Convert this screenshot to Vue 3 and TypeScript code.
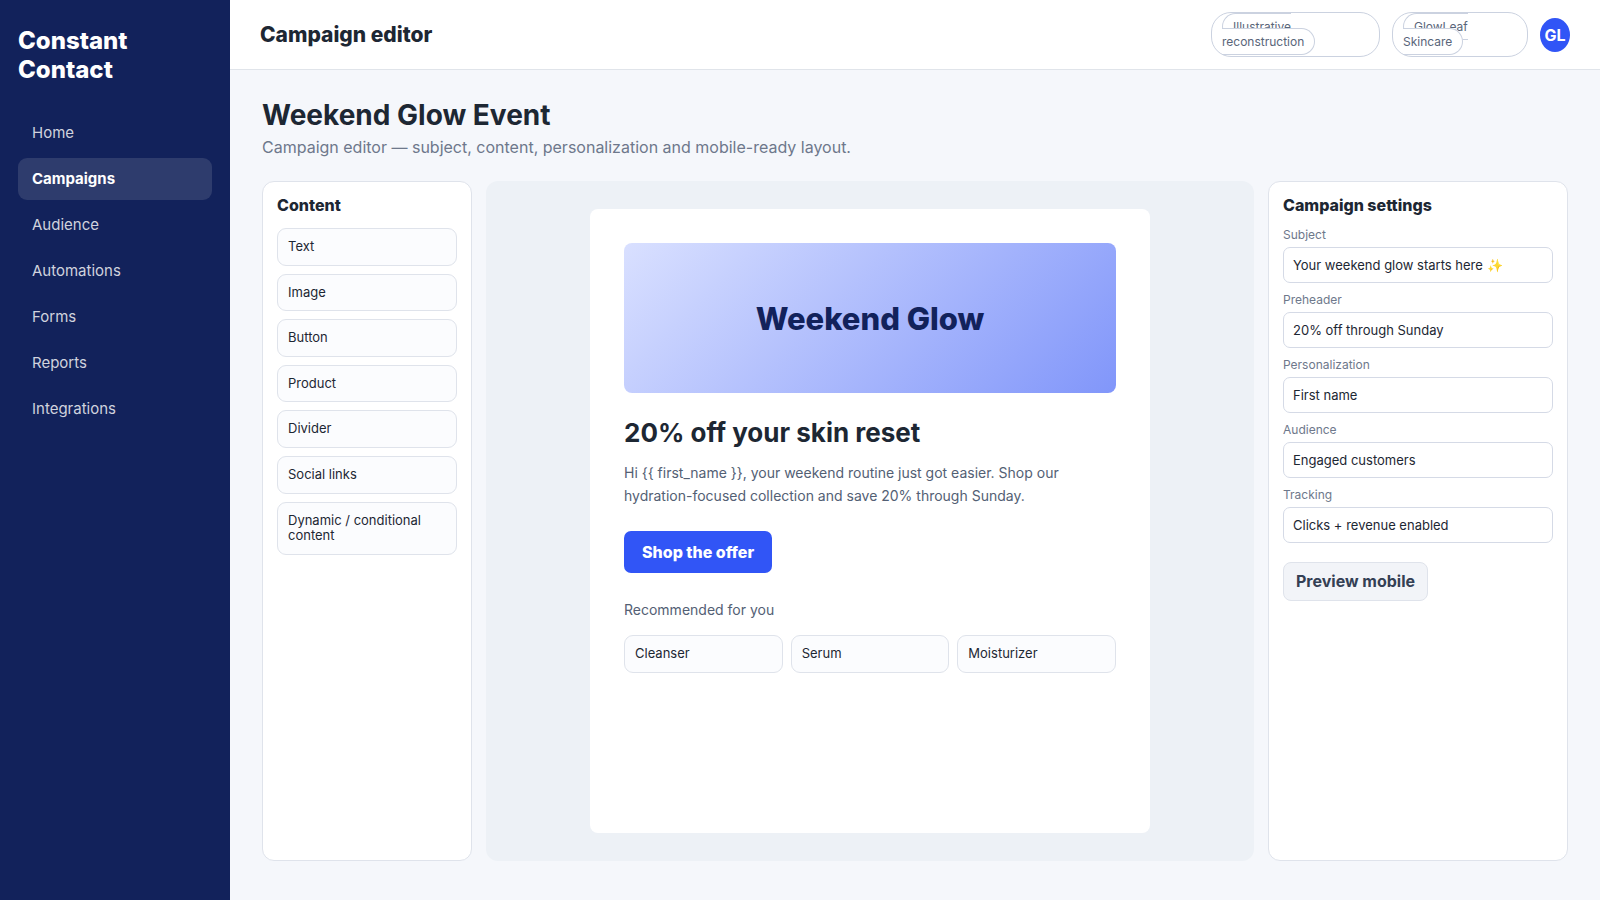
<script setup lang="ts">
import { ref } from 'vue'

interface Field {
  id: string
  label: string
  value: string
}

const navItems: string[] = ['Home', 'Campaigns', 'Audience', 'Automations', 'Forms', 'Reports', 'Integrations']
const activeItem = ref('Campaigns')

const blocks: string[] = ['Text', 'Image', 'Button', 'Product', 'Divider', 'Social links', 'Dynamic / conditional content']
const products: string[] = ['Cleanser', 'Serum', 'Moisturizer']
const tags: string[] = ['Illustrative reconstruction', 'GlowLeaf Skincare']

const fields = ref<Field[]>([
  { id: 'subject', label: 'Subject', value: 'Your weekend glow starts here ✨' },
  { id: 'preheader', label: 'Preheader', value: '20% off through Sunday' },
  { id: 'personalization', label: 'Personalization', value: 'First name' },
  { id: 'audience', label: 'Audience', value: 'Engaged customers' },
  { id: 'tracking', label: 'Tracking', value: 'Clicks + revenue enabled' },
])

const bodyCopy =
  'Hi {{ first_name }}, your weekend routine just got easier. Shop our hydration-focused collection and save 20% through Sunday.'
</script>

<template>
  <div class="app">
    <aside class="sidebar">
      <div class="brand">Constant Contact</div>
      <nav class="nav">
        <a
          v-for="item in navItems"
          :key="item"
          href="#"
          class="nav-link"
          :class="{ active: item === activeItem }"
          @click.prevent="activeItem = item"
        >{{ item }}</a>
      </nav>
    </aside>

    <div class="main">
      <header class="topbar">
        <strong class="topbar-title">Campaign editor</strong>
        <div class="account">
          <div v-for="tag in tags" :key="tag" class="pill"><span class="pill-text">{{ tag }}</span></div>
          <div class="avatar">GL</div>
        </div>
      </header>

      <main class="page">
        <h1 class="page-title">Weekend Glow Event</h1>
        <p class="page-sub">Campaign editor — subject, content, personalization and mobile-ready layout.</p>

        <div class="editor">
          <section class="panel">
            <h2 class="panel-title">Content</h2>
            <div class="blocks">
              <button v-for="block in blocks" :key="block" type="button" class="block">{{ block }}</button>
            </div>
          </section>

          <section class="canvas">
            <article class="email">
              <div class="hero">Weekend Glow</div>
              <h2 class="email-title">20% off your skin reset</h2>
              <p class="copy">{{ bodyCopy }}</p>
              <button type="button" class="cta">Shop the offer</button>
              <p class="copy">Recommended for you</p>
              <div class="products">
                <div v-for="product in products" :key="product" class="block">{{ product }}</div>
              </div>
            </article>
          </section>

          <section class="panel">
            <h2 class="panel-title">Campaign settings</h2>
            <form class="settings" @submit.prevent>
              <div v-for="field in fields" :key="field.id" class="field">
                <label :for="field.id">{{ field.label }}</label>
                <input :id="field.id" v-model="field.value" type="text" />
              </div>
              <button type="button" class="secondary">Preview mobile</button>
            </form>
          </section>
        </div>
      </main>
    </div>
  </div>
</template>

<style>
body {
  margin: 0;
  background: #f5f7fb;
}
</style>

<style scoped>
.app,
.app * {
  box-sizing: border-box;
}

.app {
  display: grid;
  grid-template-columns: 230px 1fr;
  min-height: 100vh;
  font-family: Inter, 'Liberation Sans', sans-serif;
  font-size: 16px;
  color: #1d2733;
  background: #f5f7fb;
}

.app button,
.app input {
  font-family: inherit;
}

h1,
h2,
p {
  margin: 0;
}

.sidebar {
  padding: 26px 18px;
  background: #12225b;
  color: #fff;
}

.brand {
  margin-bottom: 28px;
  font-size: 24px;
  font-weight: 800;
}

.nav {
  display: flex;
  flex-direction: column;
  gap: 4px;
}

.nav-link {
  padding: 12px 14px;
  border-radius: 9px;
  color: #d0d3de;
  font-size: 15px;
  line-height: 18px;
  text-decoration: none;
}

.nav-link.active {
  background: #2e3c6d;
  color: #fff;
  font-weight: 700;
}

.main {
  min-width: 0;
}

.topbar {
  display: flex;
  align-items: center;
  justify-content: space-between;
  height: 70px;
  padding: 0 30px;
  background: #fff;
  border-bottom: 1px solid #e0e4ea;
}

.topbar-title {
  font-size: 21px;
  font-weight: 800;
}

.account {
  display: flex;
  align-items: center;
  gap: 12px;
  width: 359px;
}

.pill,
.pill-text {
  border: 1px solid #cbd2e0;
  border-radius: 20px;
  background: #fff;
  color: #596579;
  font-size: 12px;
}

.pill {
  padding: 6px 10px 7px;
  line-height: 15px;
}

.pill-text {
  padding: 5px 10px;
}

.avatar {
  display: grid;
  place-items: center;
  width: 34px;
  height: 34px;
  min-width: 0;
  border-radius: 50%;
  background: #3155f6;
  color: #fff;
  font-weight: 700;
}

.page {
  padding: 28px 32px 32px;
}

.page-title {
  font-size: 28px;
  font-weight: 700;
  line-height: 34px;
}

.page-sub {
  margin-top: 5px;
  color: #6e788b;
}

.editor {
  display: grid;
  grid-template-columns: 210px 1fr 300px;
  gap: 14px;
  min-height: 680px;
  margin-top: 24px;
}

.panel {
  padding: 14px;
  background: #fff;
  border: 1px solid #dfe3eb;
  border-radius: 12px;
}

.panel-title {
  margin-bottom: 13px;
  font-size: 16px;
  font-weight: 800;
  line-height: 19px;
}

.blocks {
  display: flex;
  flex-direction: column;
  gap: 8px;
}

.block {
  padding: 10px;
  background: #fbfcfe;
  border: 1px solid #dfe3eb;
  border-radius: 9px;
  color: #1d2733;
  font-size: 13px;
  line-height: 1.2;
  text-align: left;
}

.canvas {
  display: flex;
  justify-content: center;
  padding: 28px;
  background: #edf1f6;
  border-radius: 12px;
}

.email {
  width: 100%;
  max-width: 560px;
  padding: 34px;
  background: #fff;
  border-radius: 8px;
}

.hero {
  display: grid;
  place-items: center;
  height: 150px;
  border-radius: 8px;
  background: linear-gradient(135deg, #d9e0ff, #8196fa);
  color: #12225b;
  font-size: 31px;
  font-weight: 800;
}

.email-title {
  margin: 24px 0 13px;
  font-size: 26px;
  font-weight: 700;
}

.copy {
  color: #536074;
  font-size: 14px;
  line-height: 23px;
}

.cta {
  margin: 24px 0 25px;
  padding: 11px 18px;
  border: 0;
  border-radius: 7px;
  background: #3155f6;
  color: #fff;
  font-size: 16px;
  font-weight: 800;
}

.products {
  display: grid;
  grid-template-columns: repeat(3, 1fr);
  gap: 8px;
  margin-top: 14px;
}

.settings {
  display: flex;
  flex-direction: column;
  align-items: flex-start;
  gap: 10px;
}

.field {
  display: flex;
  flex-direction: column;
  gap: 5px;
  width: 100%;
}

.field label {
  color: #6e788b;
  font-size: 12px;
  line-height: 14px;
}

.field input {
  width: 100%;
  height: 36px;
  padding: 0 9px;
  border: 1px solid #d5dae6;
  border-radius: 7px;
  background: #fff;
  color: #1d2733;
  font-size: 13px;
}

.secondary {
  margin-top: 9px;
  padding: 9px 12px;
  border: 1px solid #dfe3eb;
  border-radius: 8px;
  background: #f2f4f8;
  color: #344054;
  font-size: 16px;
  font-weight: 700;
  line-height: 19px;
}
</style>
